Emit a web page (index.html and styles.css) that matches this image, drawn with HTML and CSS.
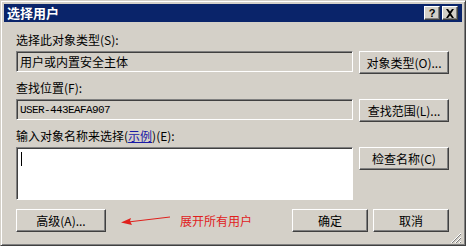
FILE: index.html
```html
<!DOCTYPE html>
<html>
<head>
    <meta charset="utf-8">
    <title>选择用户</title>
    <link rel="stylesheet" href="styles.css">
</head>
<body>
<div class="window">
    <div class="titlebar">
        <span class="title">选择用户</span>
        <div class="tbuttons">
            <span class="tbtn help">?</span>
            <span class="tbtn close">
                <svg width="10" height="9" viewBox="0 0 10 9"><path d="M1 0h2l2 2.5L7 0h2L6 4.5 9 9H7L5 6.5 3 9H1l3-4.5z" fill="#000"/></svg>
            </span>
        </div>
    </div>
    <div class="content">
        <div class="label">选择此对象类型(<u>S</u>):</div>
        <div class="row">
            <div class="field readonly">用户或内置安全主体</div>
            <div class="btn">对象类型(<u>O</u>)...</div>
        </div>

        <div class="label">查找位置(<u>F</u>):</div>
        <div class="row">
            <div class="field readonly mono">USER-443EAFA907</div>
            <div class="btn">查找范围(<u>L</u>)...</div>
        </div>

        <div class="label">输入对象名称来选择(<a class="link" href="#">示例</a>)(<u>E</u>):</div>
        <div class="row tall">
            <div class="field area"><span class="caret"></span></div>
            <div class="btn">检查名称(<u>C</u>)</div>
        </div>

        <div class="bottom">
            <div class="btn">高级(<u>A</u>)...</div>
            <div class="note">
                <svg width="52" height="12" viewBox="0 0 52 12">
                    <path d="M50 2 L8 7" stroke="#e0201c" stroke-width="1" fill="none"/>
                    <path d="M1 7.5 L11 3 L10 6 L12 10 Z" fill="#e0201c"/>
                </svg>
                <span class="notetext">展开所有用户</span>
            </div>
            <div class="btn small">确定</div>
            <div class="btn small">取消</div>
        </div>
    </div>
    <div class="grip">
        <svg width="12" height="12" viewBox="0 0 12 12">
            <path d="M11 1L1 11M11 5L5 11M11 9L9 11" stroke="#fff" stroke-width="1"/>
            <path d="M11 2L2 11M11 6L6 11M11 10L10 11" stroke="#808080" stroke-width="1"/>
        </svg>
    </div>
</div>
</body>
</html>
```

FILE: styles.css
```css
*{
    margin: 0;
    padding: 0;
    box-sizing: border-box;
}
body{
    background: #d4d0c8;
    font-family: "Noto Sans CJK SC", "Liberation Sans", sans-serif;
    font-size: 12px;
    color: #000;
}
.window{
    position: relative;
    width: 466px;
    height: 246px;
    background: #d4d0c8;
    border: 1px solid;
    border-color: #d4d0c8 #404040 #404040 #d4d0c8;
    box-shadow: inset 1px 1px #fff, inset -1px -1px #808080;
    padding: 3px;
}
.titlebar{
    height: 18px;
    background: #0a246a;
    display: flex;
    align-items: center;
    justify-content: space-between;
    padding: 0 4px 0 3px;
}
.title{
    color: #fff;
    font-weight: bold;
    font-size: 13px;
    line-height: 18px;
}
.tbuttons{
    display: flex;
    gap: 2px;
}
.tbtn{
    width: 16px;
    height: 14px;
    background: #d4d0c8;
    border: 1px solid;
    border-color: #fff #404040 #404040 #fff;
    box-shadow: inset -1px -1px #808080;
    display: flex;
    align-items: center;
    justify-content: center;
    font-family: "Liberation Sans", sans-serif;
    font-weight: bold;
    font-size: 11px;
    line-height: 12px;
}
.content{
    padding: 9px 13px 0 12px;
}
.label{
    line-height: 16px;
    height: 16px;
    margin-bottom: 3px;
    margin-top: 1px;
}
.label u, .btn u{
    text-decoration: none;
}
.link{
    color: #1a1aa6;
    text-decoration: underline;
}
.row{
    display: flex;
    justify-content: space-between;
    align-items: flex-start;
    margin-bottom: 6px;
}
.row.tall{
    margin-top: 2px;
    margin-bottom: 9px;
}
.field{
    width: 337px;
    height: 21px;
    border: 1px solid;
    border-color: #808080 #fff #fff #808080;
    box-shadow: inset 1px 1px #404040;
    padding: 2px 3px;
    line-height: 16px;
    white-space: nowrap;
}
.readonly{
    background: #d4d0c8;
}
.mono{
    font-family: "Liberation Mono", monospace;
    font-size: 11px;
    letter-spacing: -0.6px;
}
.area{
    height: 53px;
    background: #fff;
    padding: 4px 4px;
}
.caret{
    display: block;
    width: 1px;
    height: 14px;
    background: #000;
}
.btn{
    width: 90px;
    height: 23px;
    border: 1px solid;
    border-color: #fff #404040 #404040 #fff;
    box-shadow: inset -1px -1px #808080;
    background: #d4d0c8;
    display: flex;
    align-items: center;
    justify-content: center;
    line-height: 16px;
    white-space: nowrap;
}
.bottom{
    display: flex;
    align-items: center;
}
.note{
    flex: 1;
    display: flex;
    align-items: center;
    padding-left: 14px;
    gap: 8px;
}
.notetext{
    color: #e0201c;
}
.btn.small{
    width: 76px;
    margin-left: 5px;
}
.grip{
    position: absolute;
    right: 3px;
    bottom: 3px;
    width: 12px;
    height: 12px;
}
```
